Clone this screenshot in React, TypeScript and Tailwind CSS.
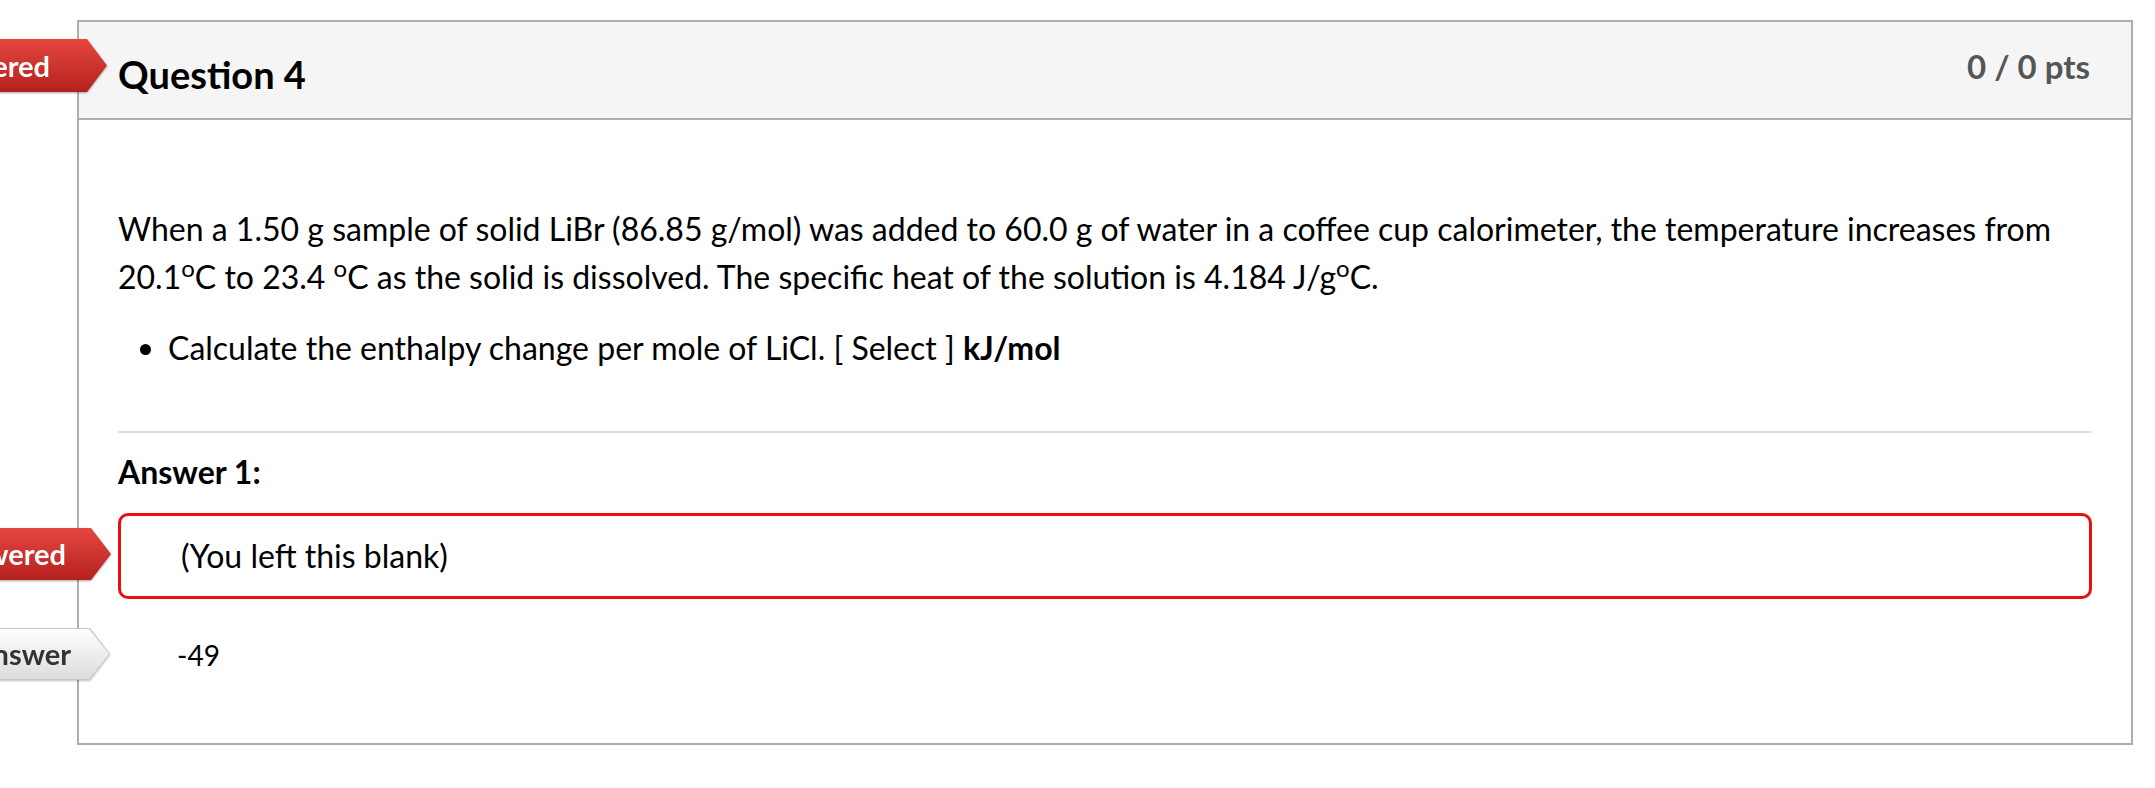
import type { ReactNode } from 'react';

const arrow =
  '[clip-path:polygon(0_0,calc(100%_-_20px)_0,100%_50%,calc(100%_-_20px)_100%,0_100%)]';

function RedFlag({ className, text, pr }: { className: string; text: string; pr: string }) {
  return (
    <div className={`absolute w-[260px] drop-shadow-[0_1px_1px_rgba(0,0,0,0.35)] ${className}`}>
      <div
        className={`flex h-full items-center justify-end whitespace-nowrap bg-gradient-to-b from-[#e4473f] to-[#b61f1d] text-[29px] font-bold text-white ${pr} ${arrow}`}
      >
        {text}
      </div>
    </div>
  );
}

function GreyFlag({ className, text, pr }: { className: string; text: string; pr: string }) {
  return (
    <div className={`absolute w-[260px] drop-shadow-[0_1px_1px_rgba(0,0,0,0.25)] ${className}`}>
      <div className={`h-full bg-[#c9c9c9] p-px ${arrow}`}>
        <div
          className={`flex h-full items-center justify-end whitespace-nowrap bg-gradient-to-b from-[#ffffff] to-[#dcdcdc] text-[29px] font-bold text-[#333] ${pr} ${arrow}`}
        >
          {text}
        </div>
      </div>
    </div>
  );
}

function Deg() {
  return <sup className="text-[0.75em] top-[-0.5em]">o</sup>;
}

function Para({ children }: { children: ReactNode }) {
  return <p className="text-[32px] leading-[48px] text-black">{children}</p>;
}

export default function App() {
  return (
    <div className="relative min-h-[788px] w-[2155px] bg-white pl-[77px] pt-[20px] font-['Lato','Liberation_Sans',sans-serif] text-black">
      <div className="w-[2056px] border-2 border-[#adadad]">
        <div className="flex h-[98px] items-start justify-between border-b-2 border-[#adadad] bg-[#f5f5f5] pl-[39px] pr-[41px]">
          <h2 className="mt-[29px] text-[38px] font-bold leading-[46px]">Question 4</h2>
          <div className="mt-[25px] text-[33px] font-bold leading-[38px] text-[#555]">0 / 0 pts</div>
        </div>

        <div className="px-[39px] pb-[64px] pt-[85px]">
          <Para>
            When a 1.50 g sample of solid LiBr (86.85 g/mol) was added to 60.0 g of water in a coffee cup
            calorimeter, the temperature increases from 20.1<Deg />C to 23.4 <Deg />C as the solid is
            dissolved. The specific heat of the solution is 4.184 J/g<Deg />C.
          </Para>
          <ul className="mt-[23px] list-disc pl-[50px] text-[32px] leading-[48px]">
            <li>
              Calculate the enthalpy change per mole of LiCl. [ Select ] <strong className="font-bold">kJ/mol</strong>
            </li>
          </ul>

          <div className="mt-[59px] h-[2px] bg-[#dedede]" />

          <div className="mt-[15px] text-[32px] font-bold leading-[48px]">Answer 1:</div>

          <div className="mt-[17px] rounded-[10px] border-[3px] border-[#e8100f] py-[16px] pl-[60px] text-[32px] leading-[48px]">
            (You left this blank)
          </div>

          <div className="mt-[32px] pl-[59px] text-[28px] leading-[48px]">-49</div>
        </div>
      </div>

      <RedFlag className="left-[-153px] top-[39px] h-[53px]" text="Unanswered" pr="pr-[57px]" />
      <RedFlag className="left-[-149px] top-[528px] h-[52px]" text="You Answered" pr="pr-[45px]" />
      <GreyFlag className="left-[-150px] top-[628px] h-[52px]" text="Correct Answer" pr="pr-[38px]" />
    </div>
  );
}
